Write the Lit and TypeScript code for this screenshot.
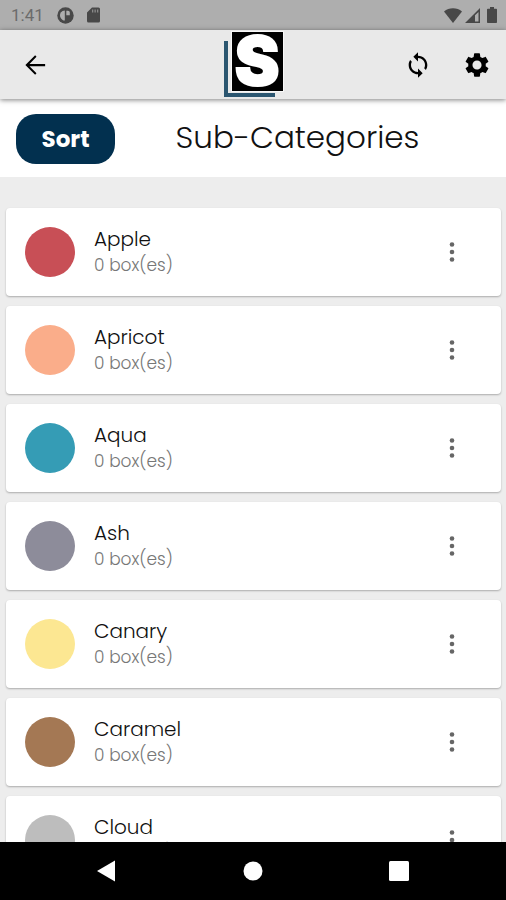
import { LitElement, html, css, svg } from "lit";
import { customElement, property } from "lit/decorators.js";
import { styleMap } from "lit/directives/style-map.js";

interface Category {
  name: string;
  boxes: number;
  color: string;
}

const CATEGORIES: Category[] = [
  { name: "Apple", boxes: 0, color: "#c84f56" },
  { name: "Apricot", boxes: 0, color: "#faad8a" },
  { name: "Aqua", boxes: 0, color: "#359cb5" },
  { name: "Ash", boxes: 0, color: "#8d8c9a" },
  { name: "Canary", boxes: 0, color: "#fce792" },
  { name: "Caramel", boxes: 0, color: "#a47854" },
  { name: "Cloud", boxes: 0, color: "#bdbdbd" },
];

const icon = (size: number, body: unknown) =>
  html`<svg width=${size} height=${size} viewBox="0 0 24 24" fill="currentColor" aria-hidden="true">${body}</svg>`;

const resets = css`
  :host {
    box-sizing: border-box;
    font-family: Poppins, Inter, "Open Sans", sans-serif;
  }
  button {
    border: 0;
    padding: 0;
    background: none;
    color: inherit;
    font: inherit;
    cursor: pointer;
  }
  svg {
    display: block;
  }
`;

@customElement("status-bar")
export class StatusBar extends LitElement {
  static styles = [
    resets,
    css`
      :host {
        display: flex;
        align-items: center;
        justify-content: space-between;
        height: 30px;
        padding: 0 8px 0 11px;
        background: #aeaeae;
        color: #484848;
        flex: none;
      }
      .group {
        display: flex;
        align-items: center;
      }
      .left {
        gap: 13px;
      }
      .right {
        gap: 3px;
      }
      .time {
        font: 400 17px/20px Roboto, sans-serif;
        color: #6b6b6b;
      }
    `,
  ];

  render() {
    return html`
      <div class="group left">
        <span class="time">1:41</span>
        <svg width="17" height="17" viewBox="0 0 17 17" aria-hidden="true">
          <circle cx="8.500" cy="8.500" r="8.200" fill="#484848" />
          <path d="M7.800 3.400v10.200A5.400 5.400 0 0 1 3.800 5.400 5.400 5.400 0 0 1 7.800 3.400Z" fill="#aeaeae" />
          <path d="M9.300 3.800h1.700a1.800 1.800 0 0 1 1.800 1.800v2.600H9.300Z" fill="#aeaeae" />
        </svg>
        <svg width="13" height="16" viewBox="0 0 13 16" aria-hidden="true">
          <path d="M5 .5h6.500A1.500 1.500 0 0 1 13 2v12a1.500 1.500 0 0 1-1.500 1.500h-10A1.500 1.500 0 0 1 0 14V5.500Z" fill="#484848" />
          <path d="M5 2.500h1.300v3H5ZM7.500 2.500h1.300v3H7.500ZM10 2.500h1.300v3H10Z" fill="#8a8a8a" />
        </svg>
      </div>
      <div class="group right">
        <svg width="18" height="15" viewBox="0 0 18 15" fill="currentColor" aria-hidden="true">
          <path d="M9 15 0 3.400C2.500 1.300 5.600.2 9 .2s6.500 1.100 9 3.200Z" />
        </svg>
        <svg width="15" height="15" viewBox="0 0 15 15" fill="currentColor" aria-hidden="true">
          <path fill-rule="evenodd" d="M15 0v15H0ZM13.500 4 10 7.300v6.300h3.500Z" />
        </svg>
        <svg width="15" height="16" viewBox="0 0 15 16" fill="currentColor" aria-hidden="true">
          <path d="M7 0h4v1.700h2.200c.5 0 .8.300.8.800v12.700c0 .5-.3.800-.8.800H4.800c-.5 0-.8-.3-.8-.8V2.500c0-.5.300-.8.800-.8H7Z" />
        </svg>
      </div>
    `;
  }
}

@customElement("app-header")
export class AppHeader extends LitElement {
  static styles = [
    resets,
    css`
      :host {
        display: grid;
        grid-template-columns: 1fr auto 1fr;
        align-items: center;
        height: 69px;
        padding: 0 15px 0 17px;
        background: #e9e9e9;
        color: #000;
        box-shadow: 0 1px 5px rgba(0, 0, 0, 0.5);
        flex: none;
        z-index: 1;
      }
      .back {
        justify-self: start;
      }
      .actions {
        display: flex;
        justify-content: flex-end;
        gap: 31px;
      }
      .logo {
        overflow: visible;
      }
      .logo text {
        font: 900 67px/67px Inter, sans-serif;
      }
    `,
  ];

  render() {
    return html`
      <button class="back" aria-label="Back">
        ${icon(30, svg`<path d="M22.500 11.100H10l5.600-5.700-1.100-1.200L6.700 12l7.800 7.800 1.100-1.200-5.600-5.700h12.500Z" />`)}
      </button>
      <svg class="logo" width="60" height="67" viewBox="0 0 60 67" role="img" aria-label="S">
        <path d="M0 10h4v52h47v4H0Z" fill="#2b5670" />
        <rect x="7" y="0" width="53" height="61" fill="#f8f8f8" />
        <rect x="8" y="1" width="51" height="59" fill="#000" />
        <text x="33" y="54" text-anchor="middle" fill="#fff" stroke="#fff" stroke-width="2">S</text>
      </svg>
      <div class="actions">
        <button aria-label="Refresh">
          ${icon(
            28,
            svg`<path d="M12 4V1L8 5l4 4V6c3.310 0 6 2.690 6 6 0 1.010-.25 1.970-.7 2.800l1.460 1.460C19.540 15.030 20 13.570 20 12c0-4.420-3.580-8-8-8zm0 14c-3.310 0-6-2.690-6-6 0-1.010.25-1.970.7-2.800L5.240 7.740C4.460 8.970 4 10.430 4 12c0 4.420 3.580 8 8 8v3l4-4-4-4v3z" />`
          )}
        </button>
        <button aria-label="Settings">
          ${icon(
            28,
            svg`<path d="M19.430 12.980c.04-.32.070-.64.070-.98s-.03-.66-.07-.98l2.110-1.650c.19-.15.240-.42.120-.64l-2-3.460c-.12-.22-.39-.3-.61-.22l-2.490 1c-.52-.4-1.080-.73-1.690-.98l-.38-2.650C14.460 2.180 14.250 2 14 2h-4c-.25 0-.46.180-.49.420l-.38 2.650c-.61.250-1.170.590-1.690.980l-2.490-1c-.23-.09-.49 0-.61.220l-2 3.460c-.13.220-.07.490.120.640l2.110 1.650c-.04.320-.07.650-.07.980s.03.660.070.980l-2.110 1.650c-.19.150-.24.420-.12.640l2 3.460c.12.220.390.300.610.220l2.490-1c.52.400 1.080.730 1.690.980l.38 2.650c.03.240.240.420.490.420h4c.25 0 .46-.18.490-.42l.38-2.650c.61-.25 1.170-.59 1.690-.98l2.490 1c.23.090.490 0 .61-.22l2-3.460c.12-.22.070-.49-.12-.64l-2.110-1.650zM12 15.900c-2.150 0-3.900-1.750-3.900-3.900s1.750-3.900 3.900-3.900 3.900 1.750 3.900 3.900-1.750 3.900-3.900 3.900z" />`
          )}
        </button>
      </div>
    `;
  }
}

@customElement("category-card")
export class CategoryCard extends LitElement {
  @property({ attribute: false }) category!: Category;

  static styles = [
    resets,
    css`
      :host {
        display: flex;
        align-items: center;
        gap: 19px;
        height: 88px;
        padding: 0 37px 0 19px;
        background: #fff;
        border-radius: 4px;
        box-shadow: 0 1px 2px rgba(0, 0, 0, 0.28);
        flex: none;
      }
      .swatch {
        width: 50px;
        height: 50px;
        border-radius: 50%;
        flex: none;
      }
      .text {
        flex: 1;
        min-width: 0;
      }
      .name,
      .count {
        margin: 0;
        font-weight: 300;
        line-height: 26px;
      }
      .name {
        font-size: 20px;
        color: #111;
      }
      .count {
        font-size: 17px;
        color: #777;
      }
      .more {
        color: #666;
      }
    `,
  ];

  render() {
    const { name, boxes, color } = this.category;
    return html`
      <span class="swatch" style=${styleMap({ backgroundColor: color })}></span>
      <div class="text">
        <h2 class="name">${name}</h2>
        <p class="count">${boxes} box(es)</p>
      </div>
      <button class="more" aria-label="Options for ${name}">
        <svg width="24" height="24" viewBox="0 0 24 24" fill="currentColor" aria-hidden="true">
          <circle cx="12" cy="4.500" r="2.300" />
          <circle cx="12" cy="12" r="2.300" />
          <circle cx="12" cy="19.500" r="2.300" />
        </svg>
      </button>
    `;
  }
}

@customElement("system-nav")
export class SystemNav extends LitElement {
  static styles = [
    resets,
    css`
      :host {
        display: flex;
        align-items: center;
        justify-content: center;
        gap: 126px;
        height: 58px;
        background: #000;
        color: #fff;
        flex: none;
      }
    `,
  ];

  render() {
    return html`
      <button aria-label="Back">
        <svg width="20" height="22" viewBox="0 0 20 22" fill="currentColor"><path d="M0 11 18 .5v21Z" /></svg>
      </button>
      <button aria-label="Home">
        <svg width="20" height="20" viewBox="0 0 20 20" fill="currentColor"><circle cx="10" cy="10" r="9.500" /></svg>
      </button>
      <button aria-label="Recent apps">
        <svg width="20" height="20" viewBox="0 0 20 20" fill="currentColor"><rect width="20" height="20" rx="1.500" /></svg>
      </button>
    `;
  }
}

@customElement("app-root")
export class AppRoot extends LitElement {
  static styles = [
    resets,
    css`
      :host {
        display: flex;
        flex-direction: column;
        height: 100vh;
        background: #ededed;
      }
      .toolbar {
        box-sizing: border-box;
        display: grid;
        grid-template-columns: 99px 1fr;
        align-items: center;
        height: 78px;
        padding: 2px 16px 0;
        background: #fff;
        flex: none;
      }
      .sort {
        height: 50px;
        border-radius: 20px;
        background: #02304f;
        color: #fff;
        font-size: 23px;
        font-weight: 700;
      }
      .title {
        margin: 0;
        padding: 0 10px 4px 0;
        font-size: 31px;
        font-weight: 300;
        line-height: 40px;
        text-align: center;
        color: #111;
      }
      .list {
        display: flex;
        flex-direction: column;
        gap: 10px;
        flex: 1;
        min-height: 0;
        overflow-y: auto;
        scrollbar-width: none;
        padding: 31px 5px 10px 6px;
      }
    `,
  ];

  render() {
    return html`
      <status-bar></status-bar>
      <app-header></app-header>
      <div class="toolbar">
        <button class="sort">Sort</button>
        <h1 class="title">Sub-Categories</h1>
      </div>
      <main class="list">
        ${CATEGORIES.map((c) => html`<category-card .category=${c}></category-card>`)}
      </main>
      <system-nav></system-nav>
    `;
  }
}
